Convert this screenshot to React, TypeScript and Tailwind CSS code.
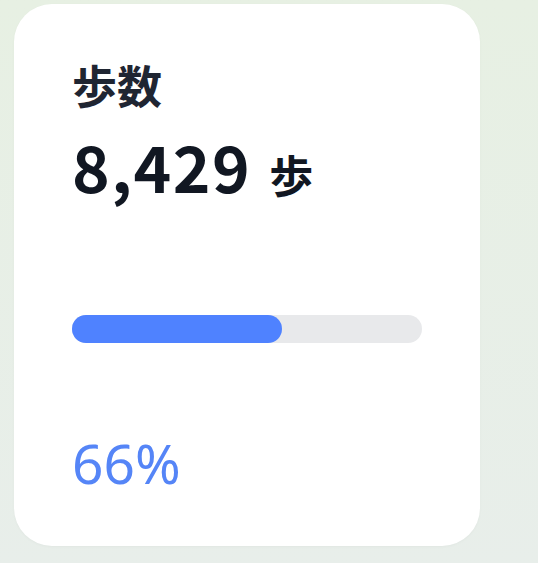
import React from 'react'

const cjk = { fontFamily: '"Noto Sans CJK JP", "Noto Sans CJK SC", sans-serif' }
const latin = { fontFamily: '"Noto Sans", "Noto Sans CJK JP", sans-serif' }

const steps = 8429
const percent = 66

export default function App() {
  return (
    <div
      className="min-h-screen w-full bg-gradient-to-b from-[#e7f0e3] to-[#e8eeea] pt-[4px] pl-[14px]"
      style={cjk}
    >
      {/* Card */}
      <div className="w-[466px] rounded-[38px] bg-white px-[58px] pt-[58px] pb-[56px] shadow-[0_1px_3px_rgba(0,0,0,0.03)]">
        <h2 className="text-[45px] leading-none font-bold text-[#1f2532]">歩数</h2>

        <div className="mt-[26px] flex items-baseline gap-[18px] text-[#111722]">
          <span className="text-[64px] leading-none font-bold tracking-[1.5px]">
            {steps.toLocaleString('en-US')}
          </span>
          <span className="text-[44px] leading-none font-bold">歩</span>
        </div>

        {/* Progress */}
        <div className="mt-[118px] h-[28px] w-full rounded-full bg-[#e8e9eb]">
          <div className="h-full w-[60%] rounded-full bg-[#4f82ff]" />
        </div>

        <div className="mt-[92px] text-[55px] leading-none font-normal text-[#5585f7]" style={latin}>
          {percent}%
        </div>
      </div>
    </div>
  )
}
